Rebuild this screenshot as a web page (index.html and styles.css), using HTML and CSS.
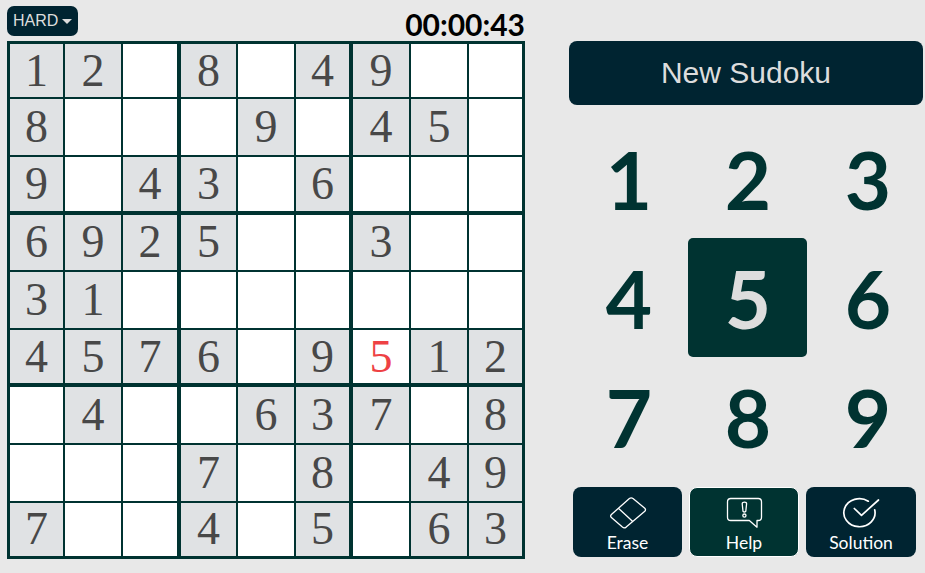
FILE: index.html
```
<!DOCTYPE html>
<html lang="en">
<head>
<meta charset="utf-8">
<title>Sudoku</title>
<link rel="stylesheet" href="styles.css">
</head>
<body>
<main class="game">
  <section class="play">
    <header class="topbar">
      <button class="level">HARD<span class="caret"></span></button>
      <time class="timer">00:00:43</time>
    </header>
    <div class="board" id="board"></div>
  </section>
  <aside class="controls">
    <button class="new-game">New Sudoku</button>
    <div class="numpad">
      <button>1</button><button>2</button><button>3</button>
      <button>4</button><button class="active">5</button><button>6</button>
      <button>7</button><button>8</button><button>9</button>
    </div>
    <div class="actions">
      <button class="action">
        <svg width="44" height="36" viewBox="0 0 44 36"><path d="M5.4 18.5 L23.4 2.5 Q25.2 1.1 27 2.5 L38.8 12.3 Q40.2 13.7 38.8 15.3 L20.2 31.1 Q18.2 32.5 16.4 31.1 L5.4 21.6 Q3.9 20 5.4 18.5 Z M12.7 12.6 L26.2 25.1"/></svg>
        <span>Erase</span>
      </button>
      <button class="action help">
        <svg width="44" height="36" viewBox="0 0 44 36"><path d="M8.8 2.5 H36.2 Q39.5 2.5 39.5 5.8 V21.2 Q39.5 24.5 36.2 24.5 H35 V31.2 L27.3 24.5 H8.8 Q5.5 24.5 5.5 21.2 V5.8 Q5.5 2.5 8.8 2.5 Z"/><path d="M20.2 7.7 Q20.2 6.2 22.4 6.2 Q24.6 6.2 24.6 7.7 L23.8 15.2 Q22.4 16.8 21 15.2 Z"/><circle cx="22.4" cy="19.6" r="1.6"/></svg>
        <span>Help</span>
      </button>
      <button class="action">
        <svg class="bold" width="44" height="36" viewBox="0 0 44 36"><path d="M29.3 5.2 A15.6 14 0 1 0 35.7 13.8 M15.3 12.5 L22.5 19.3 L39.5 4"/></svg>
        <span>Solution</span>
      </button>
    </div>
  </aside>
</main>
<script src="board.js"></script>
</body>
</html>
```
FILE: styles.css
```
* { box-sizing: border-box; }
body {
  margin: 0;
  height: 573px;
  overflow: hidden;
  background: #e8e8e8;
  font-family: Lato, sans-serif;
}
button { margin: 0; padding: 0; border: 0; font: inherit; }
.game { display: flex; gap: 44px; padding: 6px 0 0 7px; }
.play { flex: none; width: 518px; }
.topbar { display: flex; justify-content: space-between; height: 35px; }
.level {
  display: flex;
  align-items: center;
  gap: 4px;
  width: 71px;
  height: 30px;
  padding: 0 0 1px 6px;
  border-radius: 7px;
  background: #002431;
  color: #ddd;
  font: 16px/18px "Liberation Sans", sans-serif;
}
.caret { margin-top: 1px; border: 5px solid transparent; border-top-color: #ddd; border-bottom: 0; }
.timer { font-size: 30px; font-weight: 700; line-height: 36px; color: #000; }
.board {
  display: grid;
  grid-template-columns: 55px 58px 58px 57px 58px 57px 58px 58px 53px;
  grid-template-rows: 55px 58px 58px 57px 58px 57px 58px 58px 53px;
  border: 3px solid #003331;
}
.cell {
  display: flex;
  align-items: center;
  justify-content: center;
  border: 0 solid #003331;
  border-right-width: 2px;
  border-bottom-width: 2px;
  background: #fff;
  color: #484848;
  font: 46px/52px "Liberation Serif", serif;
}
.cell.given { background: #e0e2e4; }
.cell.wrong { color: #ee4144; }
.cell.box-right { border-right-width: 4px; }
.cell.box-bottom { border-bottom-width: 4px; }
.cell.row-4, .cell.last-row { padding-bottom: 1px; }
.cell.last-col { border-right-width: 0; }
.cell.last-row { border-bottom-width: 0; }
.controls { flex: none; width: 357px; padding-top: 35px; }
.new-game {
  display: block;
  width: 354px;
  height: 64px;
  border-radius: 8px;
  background: #002431;
  color: #ddd;
  font: 30px "Liberation Sans", sans-serif;
}
.numpad { display: grid; grid-template: repeat(3, 119px) / repeat(3, 119px); margin-top: 14px; }
.numpad button {
  padding: 2px 0 0 1px;
  border-radius: 5px;
  background: transparent;
  color: #003331;
  font-size: 80px;
  font-weight: 700;
  line-height: 117px;
}
.numpad button:nth-child(3n) { padding-left: 3px; }
.numpad .active { background: #003331; color: #ddd; }
.actions { display: flex; gap: 7px; margin: 11px 0 0 4px; }
.action {
  display: flex;
  flex-direction: column;
  align-items: center;
  width: 109px;
  height: 70px;
  padding-top: 9px;
  border-radius: 8px;
  background: #002431;
  color: #fff;
  font-size: 17.5px;
  line-height: 21px;
}
.action:last-child { width: 110px; }
.action.help { width: 110px; padding-top: 8px; border: 1px solid #fff; background: #003331; }
.action svg { flex: none; fill: none; stroke: #fff; stroke-width: 1.3; stroke-linejoin: round; stroke-linecap: round; }
.action svg.bold { stroke-width: 1.7; }
```
FILE: board.js
```
const rows = [
  "12.8.49..",
  "8...9.45.",
  "9.43.6...",
  "6925..3..",
  "31.......",
  "4576.9512",
  ".4..637.8",
  "...7.8.49",
  "7..4.5.63"
];
const wrong = { row: 5, col: 6 };
const board = document.getElementById("board");

rows.forEach((line, row) => {
  [...line].forEach((value, col) => {
    const cell = document.createElement("div");
    cell.className = "cell row-" + (row + 1);
    if (row === wrong.row && col === wrong.col) cell.classList.add("wrong");
    else if (value !== ".") cell.classList.add("given");
    if (col === 2 || col === 5) cell.classList.add("box-right");
    if (row === 2 || row === 5) cell.classList.add("box-bottom");
    if (col === 8) cell.classList.add("last-col");
    if (row === 8) cell.classList.add("last-row");
    if (value !== ".") cell.textContent = value;
    board.appendChild(cell);
  });
});
```
